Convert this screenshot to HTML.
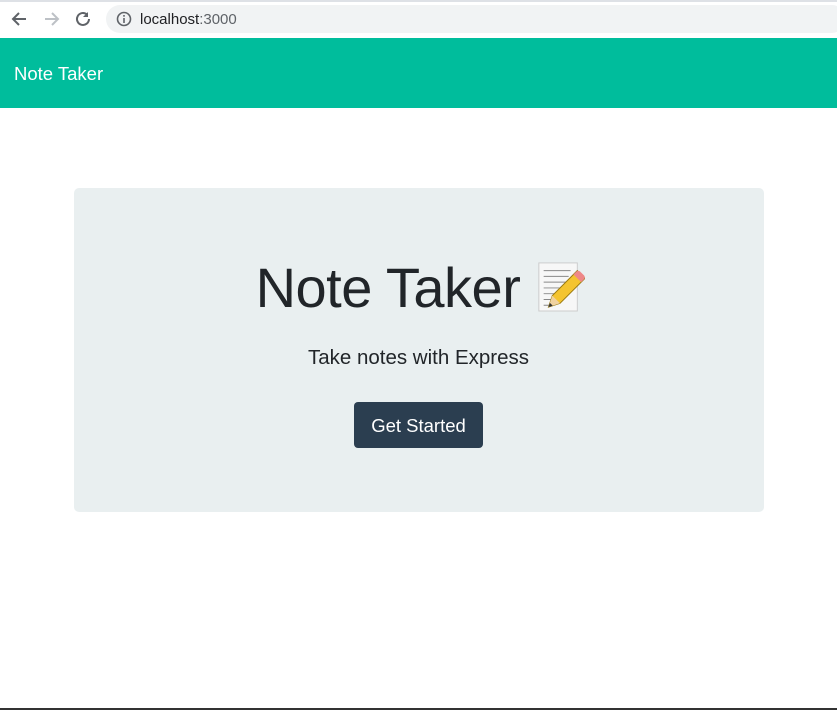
<!DOCTYPE html>
<html><head><meta charset="utf-8"><style>
*{margin:0;padding:0;box-sizing:border-box}
body{width:837px;height:710px;background:#fff;font-family:"Liberation Sans",sans-serif;position:relative;overflow:hidden}
.top{position:absolute;left:0;top:0;width:837px;height:2px;background:#dee1e6}
.chrome{position:absolute;left:0;top:2px;width:837px;height:36px;background:#fff}
.addr{position:absolute;left:106px;top:5px;width:740px;height:28px;border-radius:14px;background:#f1f3f4}
.url{position:absolute;left:140px;top:11px;font-size:15px;color:#202124}
.url span{color:#5f6368}
.nav{position:absolute;left:0;top:38px;width:837px;height:70px;background:#00bd9c}
.brand{position:absolute;left:14px;top:63px;color:#fff;font-size:18.5px}
.card{position:absolute;left:74px;top:188px;width:690px;height:324px;background:#e9eff0;border-radius:5px}
h1{position:absolute;left:0;width:100%;top:255px;text-align:center;font-weight:400;font-size:56px;color:#212529;letter-spacing:-0.5px;padding-left:4px}
.sub{position:absolute;left:0;width:100%;top:346px;text-align:center;font-size:20.5px;color:#212529}
.btn{position:absolute;left:354px;top:402px;width:129px;height:46px;background:#2b3e50;border-radius:4px;color:#fff;font-size:18.5px;text-align:center;line-height:48px}
.bottom{position:absolute;left:0;bottom:0;width:837px;height:2px;background:#333}
</style></head><body>
<div class="top"></div>
<div class="chrome"></div>
<svg style="position:absolute;left:10px;top:10px" width="80" height="18" viewBox="0 0 80 18">
<path d="M16 9H3M9 3L3 9l6 6" stroke="#5f6368" stroke-width="2" fill="none"/>
<path d="M35 9h13M42 3l6 6-6 6" stroke="#bdc1c6" stroke-width="2" fill="none"/>
<path d="M80 9a6 6 0 1 1-2-4.5" stroke="#5f6368" stroke-width="2" fill="none" transform="translate(-1,0)"/>
<path d="M79 2v5h-5z" fill="#5f6368" transform="translate(-1,0)"/>
</svg>
<div class="addr"></div>
<svg style="position:absolute;left:116px;top:11px" width="16" height="16" viewBox="0 0 16 16"><circle cx="8" cy="8" r="6.5" stroke="#5f6368" stroke-width="1.6" fill="none"/><rect x="7.2" y="7" width="1.6" height="5" fill="#5f6368"/><rect x="7.2" y="4" width="1.6" height="1.7" fill="#5f6368"/></svg>
<div class="url">localhost<span>:3000</span></div>
<div class="nav"></div>
<div class="brand">Note Taker</div>
<div class="card"></div>
<h1>Note Taker <svg width="50" height="54" viewBox="0 0 52 56" style="vertical-align:-6px"><rect x="4" y="4" width="40" height="50" fill="#f7f7f7" stroke="#ccc"/><g stroke="#888" stroke-width="1"><path d="M9 12h28M9 18h26M9 24h28M9 30h20M9 36h16M9 42h14M9 48h10"/></g><path d="M14 50l4-12 26-26 8 8-26 26z" fill="#f4c430" stroke="#9a7a10"/><path d="M40 16l8 8 3-3a3 3 0 0 0 0-4l-4-4a3 3 0 0 0-4 0z" fill="#e88"/><path d="M14 50l4-12 8 8z" fill="#f0d2a0"/><path d="M14 50l1.5-4.5 3 3z" fill="#333"/></svg></h1>
<div class="sub">Take notes with Express</div>
<div class="btn">Get Started</div>
<div class="bottom"></div>
</body></html>
